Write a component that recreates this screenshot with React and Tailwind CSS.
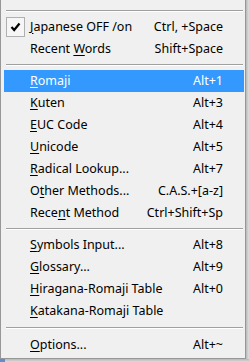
const sections = [
  [
    { label: "Japanese OFF /on", key: 0, shortcut: "Ctrl, +Space", checked: true },
    { label: "Recent Words", key: 7, shortcut: "Shift+Space" },
  ],
  [
    { label: "Romaji", key: 0, shortcut: "Alt+1", active: true },
    { label: "Kuten", key: 0, shortcut: "Alt+3" },
    { label: "EUC Code", key: 0, shortcut: "Alt+4" },
    { label: "Unicode", key: 0, shortcut: "Alt+5" },
    { label: "Radical Lookup...", key: 0, shortcut: "Alt+7" },
    { label: "Other Methods...", key: 1, shortcut: "C.A.S.+[a-z]" },
    { label: "Recent Method", key: 4, shortcut: "Ctrl+Shift+Sp" },
  ],
  [
    { label: "Symbols Input...", key: 0, shortcut: "Alt+8" },
    { label: "Glossary...", key: 0, shortcut: "Alt+9" },
    { label: "Hiragana-Romaji Table", key: 0, shortcut: "Alt+0" },
    { label: "Katakana-Romaji Table", key: 0, shortcut: "" },
  ],
  [{ label: "Options...", key: 0, shortcut: "Alt+~" }],
];

const Separator = ({ tall }) => (
  <div className={`flex items-center pl-[2px] pr-[1px] ${tall ? "h-[12px]" : "h-[10px]"}`}>
    <div className="w-full border-t border-b border-t-[#a0a0a0] border-b-white" />
  </div>
);

const Label = ({ text, index }) => (
  <span>
    {text.slice(0, index)}
    <span className="underline underline-offset-[2px]">{text[index]}</span>
    {text.slice(index + 1)}
  </span>
);

const Row = ({ item }) => (
  <div
    className={`relative flex h-[22px] items-center pl-[26px] pr-[21px] ${
      item.active ? "bg-[#3399ff] text-white" : "text-black"
    }`}
  >
    {item.checked ? (
      <div className="absolute left-[2px] top-[1px] flex h-[20px] w-[19px] items-center justify-center border border-[#b0b0b0] bg-[#f6f6f6]">
        <svg width="11" height="10" viewBox="0 0 11 10">
          <path d="M1.5 5 L4.2 8 L9.5 1.5" stroke="#000" strokeWidth="2.2" fill="none" />
        </svg>
      </div>
    ) : null}
    <span className="flex-1">
      <Label text={item.label} index={item.key} />
    </span>
    <span>{item.shortcut}</span>
  </div>
);

export default function App() {
  return (
    <div className="relative h-[362px] w-[249px] overflow-hidden bg-[#e8e8e8] font-['Noto_Sans',sans-serif] text-[12.5px] leading-none">
      <div className="flex h-[359px] w-[246px]">
        <div className="h-full flex-1 border-l border-r border-b border-[#979797] bg-[#f0f0f0] pl-[3px] pr-[1px] pt-[6px]">
          {sections.map((items, i) => (
            <div key={i}>
              <Separator tall={i === sections.length - 1} />
              {items.map((item) => (
                <Row key={item.label} item={item} />
              ))}
            </div>
          ))}
        </div>
      </div>
      <div className="absolute right-0 top-0 h-[362px] w-[3px] bg-gradient-to-r from-[#b8b8b8] to-[#e0e0e0]" />
      <div className="absolute bottom-0 left-0 h-[3px] w-[249px] bg-gradient-to-b from-[#b8b8b8] to-[#dcdcdc]" />
      <div className="absolute bottom-0 left-0 h-[3px] w-[5px] bg-[#5b8fd0]" />
    </div>
  );
}
